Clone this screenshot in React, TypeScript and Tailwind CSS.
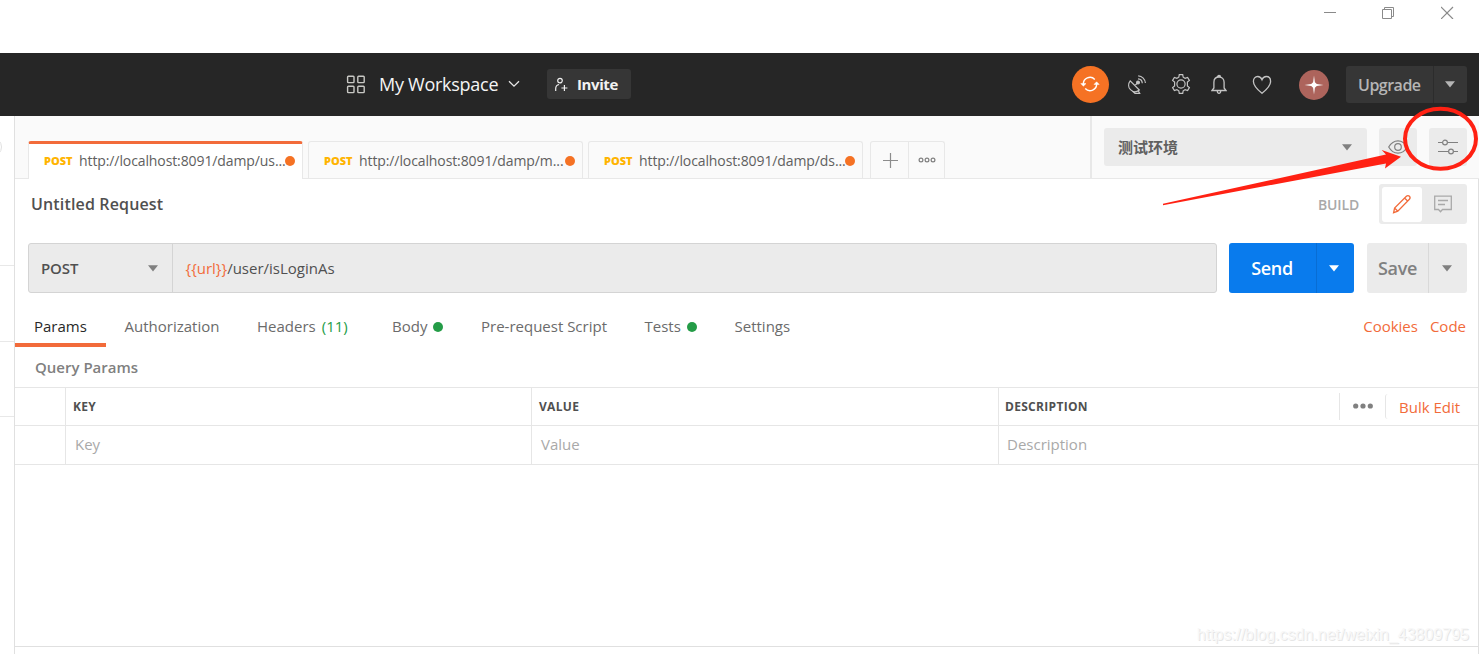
import type { ReactNode } from 'react'

type RequestTab = { method: string; url: string; active?: boolean }

const requestTabs: RequestTab[] = [
  { method: 'POST', url: 'http://localhost:8091/damp/us...', active: true },
  { method: 'POST', url: 'http://localhost:8091/damp/m...' },
  { method: 'POST', url: 'http://localhost:8091/damp/ds...' },
]

function Caret({ className }: { className?: string }) {
  return (
    <svg width="10" height="7" viewBox="0 0 10 7" className={`shrink-0 ${className ?? ''}`}>
      <path d="M0 0.3h10L5 6.5z" fill="currentColor" />
    </svg>
  )
}

function WindowControls() {
  return (
    <div className="flex h-[53px] shrink-0 items-start justify-end bg-white pr-[25px] pt-[6px] text-[#8a8a8a]">
      <svg width="13" height="13" viewBox="0 0 13 13" fill="none" stroke="currentColor">
        <path d="M0 6.5h12" />
      </svg>
      <svg width="13" height="13" viewBox="0 0 13 13" fill="none" stroke="currentColor" className="ml-[45px]">
        <path d="M0.5 3.5h9v9h-9zM2.5 3.5v-2h9v9h-2" />
      </svg>
      <svg width="13" height="13" viewBox="0 0 13 13" fill="none" stroke="currentColor" strokeWidth="1.2" className="ml-[46px]">
        <path d="M0 1l12 12M12 1l-12 12" />
      </svg>
    </div>
  )
}

function Header() {
  return (
    <header className="flex h-[63px] shrink-0 items-center bg-[#262626] pb-px pr-3 text-white">
      <svg width="20" height="20" viewBox="0 0 20 20" fill="none" stroke="#c8c8c4" strokeWidth="1.4" className="ml-[346px] mt-px">
        <rect x="1.6" y="1.2" width="6.4" height="6.4" rx="0.8" />
        <rect x="11.8" y="1.2" width="6.4" height="6.4" rx="0.8" />
        <rect x="1.6" y="11.2" width="6.4" height="6.4" rx="0.8" />
        <rect x="11.8" y="11.2" width="6.4" height="6.4" rx="0.8" />
      </svg>
      <span className="ml-[13px] mt-px w-[129px] text-[18px] tracking-[-0.27px] text-[#f5f5f5]">My Workspace</span>
      <svg width="12" height="8" viewBox="0 0 12 8" fill="none" stroke="#e6e6e6" strokeWidth="1.3">
        <path d="M1 1.2l5 5 5-5" />
      </svg>
      <button className="ml-[27px] flex h-[30px] w-[84px] items-center rounded-[3px] bg-[#363636] pl-[8px]">
        <svg width="14" height="15" viewBox="0 0 14 15" fill="none" stroke="#f0f0f0" strokeWidth="1.2" className="mt-px">
          <circle cx="5" cy="3.6" r="2.3" />
          <path d="M0.7 14v-2.2c0-2.3 1.2-4 3.4-4.3M9.4 8v6M6.4 11h6" />
        </svg>
        <span className="ml-[8px] text-[15px] font-bold tracking-[-0.4px] text-[#f2f2f2]">Invite</span>
      </button>

      <div className="ml-auto flex items-center pt-px text-[#c4c4c4]">
        <span className="flex h-[37px] w-[37px] items-center justify-center rounded-full bg-[#f57224]">
          <svg width="20" height="18" viewBox="0 0 20 18" fill="none" stroke="#fff" strokeWidth="1.4" className="-ml-px -mt-px">
            <path d="M3.4 9.5a6.6 6.6 0 0 1 11.4-5M16.6 8.5a6.6 6.6 0 0 1-11.4 5" />
            <path d="M0.8 8.6l2.6 2.6L6 8.6zM14 9.4l2.6-2.6 2.6 2.6z" fill="#fff" strokeWidth="0.5" />
          </svg>
        </span>
        <svg width="20" height="20" viewBox="0 0 20 20" fill="none" stroke="currentColor" strokeWidth="1.2" className="ml-[18px]">
          <path d="M3.2 5.8c-2.3 2.9-2 6.600.3 8.900 2.400 2.400 6 2.500 8.800.3zM7.800 10.600l3-3M5.300 16l2.700 2.400h4.700l-1.500-2.600" />
          <circle cx="11" cy="7.6" r="1.4" fill="currentColor" />
          <path d="M11 3.9a4.6 4.6 0 0 1 4.300 4.300M11.200.900a7.500 7.500 0 0 1 7.200 7.200" />
        </svg>
        <svg width="20" height="20" viewBox="0 0 20 20" fill="none" stroke="currentColor" strokeWidth="1.2" className="-mt-px ml-[24px]">
          <path d="M8.300.700h3.400l.5 2.500 1.900 1.100 2.500-.9 1.800 3-2 1.700v3.800l2 1.700-1.800 3-2.500-.9-1.900 1.100-.5 2.500H8.300l-.5-2.500-1.900-1.100-2.500.9-1.800-3 2-1.700V8.100l-2-1.700 1.800-3 2.500.9 1.900-1.100z" />
          <circle cx="10" cy="10" r="4.1" />
        </svg>
        <svg width="16" height="21" viewBox="0 0 16 21" fill="none" stroke="currentColor" strokeWidth="1.3" className="ml-[20px]">
          <path d="M1 16.5h14l-1.9-2.5V8.3C13.1 5 11 3 8 3S2.9 5 2.9 8.3V14zM6.5 3a1.5 1.500 0 1 1 3 0M6.3 16.8a1.7 2.5 0 0 0 3.400 0" />
        </svg>
        <svg width="20" height="20" viewBox="0 0 20 20" fill="none" stroke="currentColor" strokeWidth="1.3" className="ml-[25px]">
          <path d="M10 18.3C6 15 1.4 10.800 1.4 6.400 1.4 3.500 3.200 1.500 5.700 1.500c2 0 3.500 1.100 4.300 3.200.8-2.100 2.300-3.200 4.300-3.200 2.500 0 4.300 2 4.300 4.900 0 4.400-4.600 8.600-8.600 11.900z" />
        </svg>
        <span className="ml-[27px] flex h-[30px] w-[30px] items-center justify-center rounded-full bg-[#ad645c]">
          <svg width="20" height="20" viewBox="0 0 20 20">
            <path d="M10 .5l.9 6.700 1.900 1.900 6.700.9-6.700.9-1.900 1.900-.9 6.700-.9-6.700-1.900-1.900L.5 10l6.700-.9 1.900-1.900z" fill="#fff" />
          </svg>
        </span>
        <div className="ml-[17px] flex h-[37px] w-[121px] rounded-[3px] bg-[#363636] text-[#b5b5b5]">
          <span className="flex w-[88px] items-center border-r border-[#2c2c2c] pl-[12px] text-[16px] font-semibold tracking-[-0.5px]">
            Upgrade
          </span>
          <span className="flex flex-1 items-center justify-center pr-[2px]">
            <Caret />
          </span>
        </div>
      </div>
    </header>
  )
}

function Tab({ tab }: { tab: RequestTab }) {
  return (
    <div
      className={`flex w-[275px] items-center rounded-t-[3px] border-x border-[#e8e8e8] pl-[15px] ${
        tab.active ? 'h-[38px] border-t-[3px] border-t-[#f26b3a] bg-white' : 'h-[37px] border-t bg-[#fafafa] pt-[2px]'
      }`}
    >
      <span className="w-[35px] text-[11px] font-extrabold text-[#ffb400]">{tab.method}</span>
      <span className="-mt-[2px] w-[206px] whitespace-nowrap text-[14px] tracking-[-0.1px] text-[#606060]">{tab.url}</span>
      <span className="-mt-px h-[10px] w-[10px] shrink-0 rounded-full bg-[#f57224]" />
    </div>
  )
}

function TabStrip() {
  return (
    <div className="flex h-[63px] shrink-0 bg-[#fafafa] shadow-[inset_0_-1px_0_#e8e8e8]">
      <div className="flex w-[1075px] items-start gap-[5px] pl-[13px] pt-[25px]">
        {requestTabs.map((t) => (
          <Tab key={t.url} tab={t} />
        ))}
        <div className="ml-[2px] flex h-[37px] w-[75px] rounded-t-[3px] border border-b-0 border-[#e8e8e8]">
          <span className="flex w-[38px] items-center justify-center border-r border-[#e8e8e8] pl-[2px]">
            <svg width="15" height="15" viewBox="0 0 15 15" stroke="#8c8c8c" strokeWidth="1.2">
              <path d="M0 7.5h15M7.5 0v15" />
            </svg>
          </span>
          <span className="flex flex-1 items-center justify-center">
            <svg width="18" height="6" viewBox="0 0 18 6" fill="none" stroke="#808080" strokeWidth="1.2">
              <circle cx="3" cy="3" r="1.9" />
              <circle cx="9" cy="3" r="1.9" />
              <circle cx="15" cy="3" r="1.9" />
            </svg>
          </span>
        </div>
      </div>
      <div className="flex flex-1 items-start border-l-2 border-[#e8e8e8] pl-[12px] pt-[12px] text-[#808080]">
        <div className="flex h-[38px] w-[263px] items-center justify-between rounded-[3px] bg-[#ebebeb] pl-[14px] pr-[15px]">
          <span className="font-['Noto_Sans_CJK_SC',sans-serif] text-[15px] font-bold text-[#606060]">测试环境</span>
          <Caret />
        </div>
        <div className="ml-3 flex h-[38px] w-[38px] items-center justify-center rounded-[3px] bg-[#ebebeb]">
          <svg width="20" height="14" viewBox="0 0 20 14" fill="none" stroke="currentColor" strokeWidth="1.2" className="-mt-[1px]">
            <path d="M.7 7C3 3 6.200.800 10 .800S17 3 19.300 7C17 11 13.800 13.200 10 13.200S3 11 .7 7z" />
            <circle cx="10" cy="7" r="3.3" />
          </svg>
        </div>
        <div className="ml-3 flex h-[38px] w-[38px] items-center justify-center rounded-[3px] bg-[#ebebeb]">
          <svg width="20" height="16" viewBox="0 0 20 16" fill="none" stroke="currentColor" strokeWidth="1.2">
            <path d="M0 3.5h4.4M9.6 3.5H20M0 12.5h10.4M15.6 12.5H20" />
            <circle cx="7" cy="3.5" r="2.4" />
            <circle cx="13" cy="12.5" r="2.4" />
          </svg>
        </div>
      </div>
    </div>
  )
}

function RequestTitle() {
  return (
    <div className="flex h-[64px] shrink-0 items-start pl-[16px] pr-[11px] pt-[5px]">
      <span className="text-[16px] font-semibold leading-[40px] tracking-[0.15px] text-[#505050]">Untitled Request</span>
      <span className="ml-auto text-[14px] font-semibold leading-[42px] tracking-[-0.15px] text-[#a9a9a9]">BUILD</span>
      <div className="ml-[20px] flex h-[40px] w-[88px] rounded-[3px] bg-[#ebebeb] p-[3px] pb-[2px]">
        <span className="flex w-[40px] items-center justify-center rounded-[3px] bg-white">
          <svg width="20" height="20" viewBox="0 0 20 20" fill="none" stroke="#f26b3a" strokeWidth="1.3" className="-mt-px">
            <path d="M1.6 18.7l1-4.7L14.4 2.200c.9-.9 2.200-.9 3 0s.9 2.100 0 3L5.800 17.200zM12.600 4l3.200 3.200M2.600 14l3.200 3.200" />
          </svg>
        </span>
        <span className="flex flex-1 items-center justify-center">
          <svg width="18" height="18" viewBox="0 0 18 18" fill="none" stroke="#a9a9a9" strokeWidth="1.3" className="-mt-px">
            <path d="M.7 1.2h16.600v13.300H8.500L6.500 16.700l-2-2.200H.7zM4 5.500h10M4 9.500h7" />
          </svg>
        </span>
      </div>
    </div>
  )
}

function UrlBar() {
  return (
    <div className="flex h-[50px] shrink-0 pl-[13px]">
      <div className="flex w-[1189px] rounded-[3px] border border-[#d4d4d4] bg-[#ebebeb] text-[15px]">
        <div className="flex w-[144px] items-center justify-between border-r border-[#d4d4d4] pl-[12px] pr-[14px]">
          <span className="text-[15px] font-semibold tracking-[-0.1px] text-[#505050]">POST</span>
          <Caret className="text-[#808080]" />
        </div>
        <div className="flex items-center pl-[12.5px] text-[#505050]">
          <span className="text-[#f26b3a]">{'{{url}}'}</span>/user/isLoginAs
        </div>
      </div>
      <div className="ml-3 flex w-[125px] rounded-[3px] bg-[#097bed] text-white">
        <span className="flex w-[88px] items-center justify-center border-r border-[#086dd4] pr-px text-[18px] font-semibold tracking-[-0.3px]">
          Send
        </span>
        <span className="flex flex-1 items-center justify-center pr-[4px]">
          <Caret />
        </span>
      </div>
      <div className="ml-[13px] flex w-[100px] rounded-[3px] bg-[#ebebeb] text-[#808080]">
        <span className="flex w-[62px] items-center justify-center border-r border-[#d9d9d9] text-[18px] font-semibold tracking-[-0.3px]">
          Save
        </span>
        <span className="flex flex-1 items-center justify-center pr-[2px]">
          <Caret />
        </span>
      </div>
    </div>
  )
}

function SectionTab({ children, className }: { children: ReactNode; className: string }) {
  return <span className={`flex shrink-0 items-center whitespace-nowrap ${className}`}>{children}</span>
}

function SectionTabs() {
  const dot = <span className="ml-[6px] mt-[1px] h-[10px] w-[10px] rounded-full bg-[#249c47]" />
  return (
    <div className="flex h-[54px] shrink-0 pr-[12px] pt-[14px] text-[15px] text-[#6b6b6b]">
      <SectionTab className="w-[91px] border-b-4 border-[#f26b3a] pl-[19px] pt-[3px] text-[#282828]">Params</SectionTab>
      <SectionTab className="w-[151px] pb-px pl-[18.5px]">Authorization</SectionTab>
      <SectionTab className="w-[135px] pb-px">
        Headers <span className="ml-[6px] text-[#249c47]">(11)</span>
      </SectionTab>
      <SectionTab className="w-[89px] pb-px">Body{dot}</SectionTab>
      <SectionTab className="w-[163.5px] pb-px">Pre-request Script</SectionTab>
      <SectionTab className="w-[90px] pb-px">Tests{dot}</SectionTab>
      <SectionTab className="pb-px">Settings</SectionTab>
      <div className="ml-auto flex items-center gap-[12px] pb-px text-[#f26b3a]">
        <span>Cookies</span>
        <span>Code</span>
      </div>
    </div>
  )
}

function ParamsTable() {
  return (
    <div className="shrink-0 border-t border-[#e6e6e6]">
      <div className="grid h-[38px] grid-cols-[51px_466px_467px_1fr] border-b border-[#e6e6e6] text-[12px] font-bold text-[#505050]">
        <span className="border-r border-[#e6e6e6]" />
        <span className="flex items-center border-r border-[#e6e6e6] pl-[7px] tracking-[0.3px]">KEY</span>
        <span className="flex items-center border-r border-[#e6e6e6] pl-[7px] tracking-[0.3px]">VALUE</span>
        <div className="flex items-center pl-[6px]">
          <span className="tracking-[0.3px]">DESCRIPTION</span>
          <span className="ml-auto flex h-[27px] w-[46px] items-center justify-center border-l border-[#e6e6e6] pb-[2px]">
            <svg width="20" height="6" viewBox="0 0 20 6" fill="#808080">
              <circle cx="2.7" cy="3" r="2.6" />
              <circle cx="10" cy="3" r="2.6" />
              <circle cx="17.3" cy="3" r="2.6" />
            </svg>
          </span>
          <span className="flex h-[25px] w-[93px] items-center rounded-[3px] border-l border-[#e6e6e6] pl-[13px] pt-px text-[15px] font-normal text-[#f26b3a]">
            Bulk Edit
          </span>
        </div>
      </div>
      <div className="grid h-[39px] grid-cols-[51px_466px_467px_1fr] border-b border-[#e6e6e6] text-[15px] text-[#a9a9a9]">
        <span className="border-r border-[#e6e6e6]" />
        <span className="flex items-center border-r border-[#e6e6e6] pb-[2px] pl-[9px]">Key</span>
        <span className="flex items-center border-r border-[#e6e6e6] pb-[2px] pl-[9px]">Value</span>
        <span className="flex items-center pb-[2px] pl-[8px]">Description</span>
      </div>
    </div>
  )
}

function SidebarEdge() {
  return (
    <aside className="flex w-[15px] shrink-0 flex-col overflow-hidden border-r border-[#e0e0e0] bg-white">
      <div className="-ml-[18px] mt-[21px] h-[20px] w-[20px] shrink-0 rounded-full border border-[#e0e0e0]" />
      <div className="mt-[108px] h-px shrink-0 bg-[#e8e8e8]" />
      <div className="mt-[75px] h-px shrink-0 bg-[#e8e8e8]" />
      <div className="mt-[74px] h-px shrink-0 bg-[#e8e8e8]" />
    </aside>
  )
}

// Hand-drawn arrow and circle around the environment settings button
function Annotation() {
  return (
    <svg className="pointer-events-none absolute left-0 top-0" width="1479" height="654" viewBox="0 0 1479 654">
      <ellipse cx="1440.5" cy="138.7" rx="35.5" ry="30" fill="none" stroke="#ff2113" strokeWidth="4" />
      <path d="M1163 203.8L1386 154.500L1381.700 150L1401 156.700L1385 168.500L1386 163.500L1163 205.300z" fill="#ff2113" />
    </svg>
  )
}

export default function App() {
  return (
    <div className="relative flex h-[654px] w-[1479px] flex-col overflow-hidden bg-white font-['Open_Sans','Noto_Sans_CJK_SC',sans-serif]">
      <WindowControls />
      <Header />
      <div className="flex min-h-0 flex-1">
        <SidebarEdge />
        <main className="flex min-w-0 flex-1 flex-col">
          <TabStrip />
          <div className="flex min-h-0 flex-1 flex-col border-r border-[#e0e0e0]">
            <RequestTitle />
            <UrlBar />
            <SectionTabs />
            <div className="flex h-[40px] shrink-0 items-center pl-[20px] text-[15px] font-semibold text-[#808080]">Query Params</div>
            <ParamsTable />
            <div className="mb-[7px] flex-1 border-b border-[#e0e0e0]" />
          </div>
        </main>
      </div>
      <Annotation />
      <span className="absolute right-[10px] top-[625px] font-['Liberation_Sans',sans-serif] text-[16px] leading-[20px] text-[#f8f8f8] [text-shadow:1px_1px_0_#e6e6e6]">
        https://blog.csdn.net/weixin_43809795
      </span>
    </div>
  )
}
